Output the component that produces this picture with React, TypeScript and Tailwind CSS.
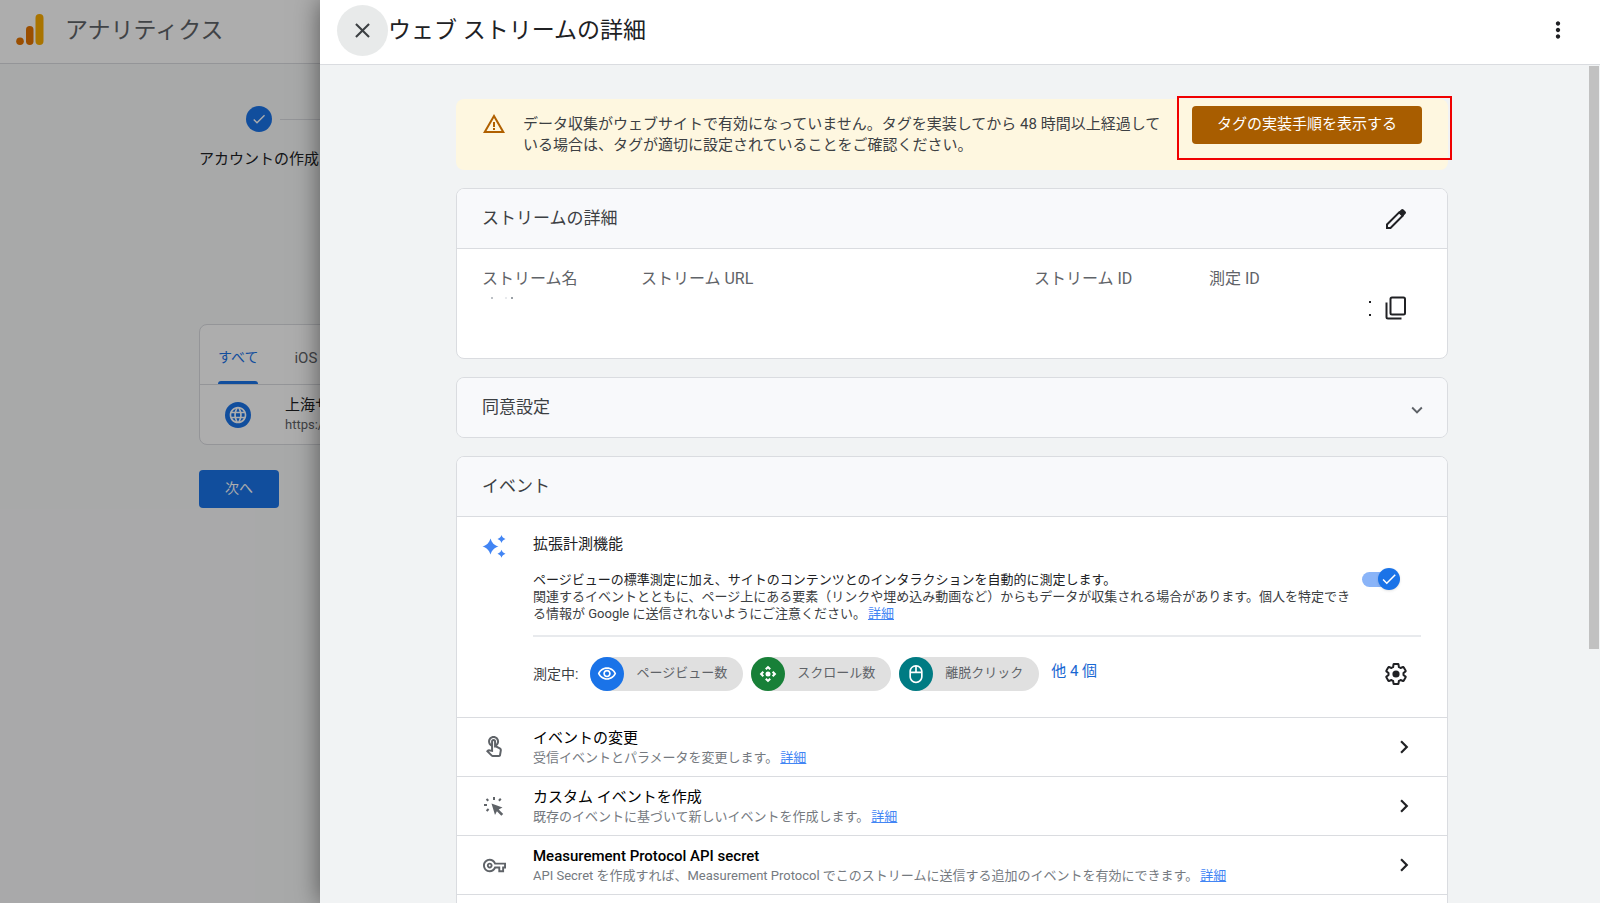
import type { ReactNode } from "react";
import {
  MdCheck,
  MdClose,
  MdControlCamera,
  MdExpandMore,
  MdLanguage,
  MdMoreVert,
  MdOutlineMouse,
  MdOutlineTouchApp,
  MdOutlineVisibility,
  MdOutlineVpnKey,
  MdNavigateNext,
  MdWarningAmber,
} from "react-icons/md";

function AnalyticsLogo() {
  return (
    <svg width="28" height="32" viewBox="0 0 28 32" className="shrink-0">
      <rect x="19.5" y="0" width="8" height="31" rx="4" fill="#F9AB00" />
      <rect x="10" y="12" width="7.5" height="19" rx="3.75" fill="#E37400" />
      <circle cx="4" cy="27.3" r="3.8" fill="#E37400" />
    </svg>
  );
}

function SparkleIcon() {
  return (
    <svg width="24" height="24" viewBox="0 0 24 24" fill="#4285F4">
      <path d="M8.5 3.5C10 8 12 10 16.500 11.500C12 13 10 15 8.500 19.500C7 15 5 13 .5 11.500C5 10 7 8 8.500 3.500z" />
      <path d="M19.500 0C20.300 2.200 21.300 3.200 23.500 4C21.300 4.800 20.300 5.800 19.500 8C18.700 5.800 17.700 4.800 15.500 4C17.700 3.200 18.700 2.200 19.500 0z" />
      <path d="M19.500 14.800C20.300 17 21.300 18 23.500 18.800C21.300 19.600 20.300 20.600 19.500 22.800C18.700 20.600 17.700 19.600 15.500 18.800C17.700 18 18.700 17 19.500 14.800z" />
    </svg>
  );
}

function PencilIcon() {
  return (
    <svg width="22" height="22" viewBox="0 0 22 22" fill="none" stroke="currentColor" strokeWidth="2">
      <path d="M2 20v-3.500L14.200 4.300l3.500 3.500L5.500 20z" />
      <path
        d="M13.500 4.200l2.700-2.700a1.600 1.600 0 0 1 2.300 0l2 2a1.600 1.600 0 0 1 0 2.300l-2.700 2.700z"
        fill="currentColor"
        stroke="none"
      />
    </svg>
  );
}

function CopyIcon() {
  return (
    <svg width="22" height="24" viewBox="0 0 22 24" fill="none" stroke="currentColor" strokeWidth="2">
      <rect x="5.500" y="1.500" width="14.500" height="17" rx="1.500" />
      <path d="M1.500 6.500V21a1.500 1.500 0 0 0 1.500 1.500h13.500" />
    </svg>
  );
}

function ClickIcon() {
  return (
    <svg width="22" height="22" viewBox="0 0 22 22" fill="currentColor">
      <path d="M8.500 8.500l11 4-3.800 2 4.500 4.400-1.900 1.900-4.400-4.500-1.900 3.600z" />
      <path
        d="M1 10h3M3.500 4l1.800 1.800M11 2v3M17.800 3.700l-1.900 2M3.600 16l2-2"
        fill="none"
        stroke="currentColor"
        strokeWidth="2"
      />
    </svg>
  );
}

function GearIcon() {
  return (
    <svg width="24" height="24" viewBox="0 0 24 24" fill="none" stroke="currentColor" strokeWidth="2">
      <path
        strokeLinejoin="round"
        d="M19.43 12.98c.04-.32.07-.64.07-.98s-.03-.66-.07-.98l2.110-1.650c.19-.15.24-.42.12-.64l-2-3.460c-.12-.22-.39-.3-.61-.22l-2.490 1c-.52-.4-1.080-.73-1.690-.98l-.38-2.650C14.460 2.180 14.250 2 14 2h-4c-.25 0-.46.18-.49.42l-.38 2.650c-.61.25-1.170.59-1.690.98l-2.490-1c-.23-.09-.49 0-.61.22l-2 3.460c-.13.22-.07.49.12.64l2.110 1.650c-.04.32-.07.65-.07.98s.03.66.07.98l-2.110 1.650c-.19.15-.24.42-.12.64l2 3.460c.12.22.39.3.61.22l2.490-1c.52.4 1.080.73 1.690.98l.38 2.650c.03.24.24.42.49.42h4c.25 0 .46-.18.49-.42l.38-2.650c.61-.25 1.170-.59 1.690-.98l2.490 1c.23.09.49 0 .61-.22l2-3.460c.12-.22.07-.49-.12-.64z"
      />
      <circle cx="12" cy="12" r="3.600" fill="currentColor" stroke="none" />
    </svg>
  );
}

const chips = [
  { label: "ページビュー数", color: "bg-[#1a73e8]", icon: <MdOutlineVisibility size={20} /> },
  { label: "スクロール数", color: "bg-[#188038]", icon: <MdControlCamera size={20} /> },
  { label: "離脱クリック", color: "bg-[#007b83]", icon: <MdOutlineMouse size={20} /> },
];

const eventRows = [
  {
    title: "イベントの変更",
    text: "受信イベントとパラメータを変更します。",
    icon: <MdOutlineTouchApp size={24} />,
    weight: "font-normal",
  },
  {
    title: "カスタム イベントを作成",
    text: "既存のイベントに基づいて新しいイベントを作成します。",
    icon: <ClickIcon />,
    weight: "font-normal",
  },
  {
    title: "Measurement Protocol API secret",
    text: "API Secret を作成すれば、Measurement Protocol でこのストリームに送信する追加のイベントを有効にできます。",
    icon: <MdOutlineVpnKey size={23} />,
    weight: "font-medium",
  },
];

function DetailsLink() {
  return (
    <a href="#details" className="ml-[2px] text-[#4285f4] underline">
      詳細
    </a>
  );
}

function Card({ title, action, children }: { title: string; action?: ReactNode; children?: ReactNode }) {
  return (
    <section className="overflow-hidden rounded-lg border border-[#dadce0] bg-white">
      <header className="flex h-[59px] items-center justify-between bg-[#f8f9fb] pl-[25px]">
        <h2 className="pb-[2px] text-[17px] leading-6 text-[#3c4043]">{title}</h2>
        {action}
      </header>
      {children}
    </section>
  );
}

function SetupPage() {
  return (
    <div className="h-full bg-[#f8f9fa]">
      <header className="flex h-16 items-center gap-[21px] border-b border-[#dadce0] bg-white px-4 pb-1">
        <AnalyticsLogo />
        <span className="pt-[2px] text-[23px] leading-8 text-[#5f6368]">アナリティクス</span>
      </header>
      <div className="w-[1200px] pt-[42px] pl-[199px]">
        <div className="flex items-center gap-2 pl-[47px]">
          <span className="flex size-[26px] items-center justify-center rounded-full bg-[#1a73e8] text-white">
            <MdCheck size={16} />
          </span>
          <span className="h-px flex-1 bg-[#dadce0]" />
        </div>
        <p className="mt-[15px] text-[15px] leading-6 text-[#202124]">アカウントの作成</p>

        <div className="mt-[153px] rounded-lg border border-[#dadce0] bg-white">
          <div className="flex h-[60px] items-end gap-9 border-b border-[#dadce0] pl-[18px] text-[14px] leading-6">
            <button className="flex flex-col items-center text-[#1a73e8]">
              すべて
              <span className="mt-3 h-[3px] w-10 rounded-t bg-[#1a73e8]" />
            </button>
            <button className="pb-[14px] text-[15px] text-[#5f6368]">iOS</button>
          </div>
          <div className="flex h-[59px] items-center gap-[34px] pl-[25px]">
            <span className="flex size-[26px] items-center justify-center rounded-full bg-[#1a73e8] text-white">
              <MdLanguage size={20} />
            </span>
            <div>
              <p className="text-[15px] leading-5 text-[#202124]">上海サイト</p>
              <p className="text-[13px] leading-5 text-[#5f6368]">https://</p>
            </div>
          </div>
        </div>

        <button className="mt-[25px] h-[38px] rounded bg-[#1a73e8] px-[26px] pb-[2px] text-[14px] text-white">
          次へ
        </button>
      </div>
    </div>
  );
}

function WarningBanner() {
  return (
    <div className="flex items-start rounded-lg bg-[#fef7e0] pt-[7px] pb-[14px] pl-[26px]">
      <MdWarningAmber size={24} className="mt-[6px] shrink-0 text-[#b06000]" />
      <p className="ml-[17px] flex-1 pt-2 text-[15px] leading-[21px] text-[#3c4043]">
        データ収集がウェブサイトで有効になっていません。タグを実装してから 48
        時間以上経過している場合は、タグが適切に設定されていることをご確認ください。
      </p>
      <div className="relative mr-[26px] ml-6">
        <button className="h-[38px] rounded bg-[#a85d00] px-[25px] pb-[2px] text-[15px] text-white">
          タグの実装手順を表示する
        </button>
        <span className="pointer-events-none absolute -top-[10px] -right-[30px] -bottom-4 -left-[15px] border-2 border-[#f00000]" />
      </div>
    </div>
  );
}

function StreamDetails() {
  return (
    <Card
      title="ストリームの詳細"
      action={
        <button aria-label="編集" className="mr-10 text-[#202124]">
          <PencilIcon />
        </button>
      }
    >
      <dl className="grid h-[110px] grid-cols-[159fr_393fr_175fr_238fr] items-start border-t border-[#dadce0] pt-[18px] pl-[25px] text-[16px] leading-6 text-[#5f6368]">
        <div>
          <dt>ストリーム名</dt>
          <dd className="flex gap-2 pt-[6px] pl-[9px]">
            <span className="size-[2px] bg-[#bdc1c6]" />
            <span className="ml-1 size-[2px] bg-[#e8eaed]" />
            <span className="-ml-1 size-[2px] bg-[#9aa0a6]" />
          </dd>
        </div>
        <dt>ストリーム URL</dt>
        <dt>ストリーム ID</dt>
        <div>
          <dt>測定 ID</dt>
          <dd className="flex items-center justify-end gap-[14px] pt-[5px] pr-10 text-[#202124]">
            <span className="flex flex-col gap-[11px]">
              <span className="size-[2px] bg-[#202124]" />
              <span className="size-[2px] bg-[#202124]" />
            </span>
            <button aria-label="コピー">
              <CopyIcon />
            </button>
          </dd>
        </div>
      </dl>
    </Card>
  );
}

function EnhancedMeasurement() {
  return (
    <div className="flex gap-[27px] border-t border-[#dadce0] pt-[17px] pb-[26px] pl-[25px]">
      <div className="shrink-0 pt-px">
        <SparkleIcon />
      </div>
      <div className="mr-[26px] flex-1 text-[#3c4043]">
        <h3 className="text-[15px] leading-5 text-[#202124]">拡張計測機能</h3>
        <div className="mt-[17px] flex items-start justify-between">
          <div className="max-w-[824px] text-[13px] leading-[17px]">
            <p className="text-[#202124]">
              ページビューの標準測定に加え、サイトのコンテンツとのインタラクションを自動的に測定します。
            </p>
            <p>
              関連するイベントとともに、ページ上にある要素（リンクや埋め込み動画など）からもデータが収集される場合があります。個人を特定できる情報が
              Google に送信されないようにご注意ください。
              <DetailsLink />
            </p>
          </div>
          <label className="relative mr-[21px] flex h-4 w-[38px] shrink-0 items-center">
            <input
              type="checkbox"
              role="switch"
              defaultChecked
              aria-label="拡張計測機能"
              className="h-[15px] w-9 appearance-none rounded-full bg-[#8ab4f8]"
            />
            <span className="absolute -top-[3px] right-0 flex size-[22px] items-center justify-center rounded-full bg-[#1a73e8] text-white shadow">
              <MdCheck size={18} />
            </span>
          </label>
        </div>
        <hr className="mt-[13px] border-t-2 border-[#e8eaed]" />
        <div className="mt-5 flex items-center gap-2">
          <span className="mr-1 text-[14px] leading-6">測定中:</span>
          {chips.map((chip) => (
            <span key={chip.label} className="flex h-[34px] items-center gap-3 rounded-full bg-[#e0e0e0] pr-4">
              <span className={`flex size-[34px] items-center justify-center rounded-full text-white ${chip.color}`}>
                {chip.icon}
              </span>
              <span className="pb-[2px] text-[13px] leading-5 text-[#5f6368]">{chip.label}</span>
            </span>
          ))}
          <button className="ml-1 pb-[6px] text-[15px] leading-5 text-[#1967d2]">他 4 個</button>
          <button aria-label="設定" className="mr-[13px] ml-auto text-[#202124]">
            <GearIcon />
          </button>
        </div>
      </div>
    </div>
  );
}

function StreamDrawer() {
  return (
    <aside className="absolute inset-y-0 right-0 left-80 flex flex-col bg-[#f1f3f4] shadow-[0_0_24px_rgba(0,0,0,0.5)]">
      <header className="flex h-[65px] shrink-0 items-center border-b border-[#dadce0] bg-white pr-[29px] pb-1 pl-[17px]">
        <button
          aria-label="閉じる"
          className="flex size-[51px] items-center justify-center rounded-full bg-[#e8eaea] text-[#3c4043]"
        >
          <MdClose size={25} />
        </button>
        <h1 className="pt-[2px] text-[23px] leading-8 text-[#202124]">ウェブ ストリームの詳細</h1>
        <button aria-label="その他" className="ml-auto text-[#202124]">
          <MdMoreVert size={26} />
        </button>
      </header>
      <div className="flex min-h-0 flex-1">
        <div className="flex-1 overflow-hidden px-4 pt-[34px]">
          <main className="mx-auto flex max-w-[992px] flex-col gap-[18px]">
            <WarningBanner />
            <StreamDetails />
            <Card
              title="同意設定"
              action={
                <button aria-label="展開" className="mt-1 mr-[19px] text-[#5f6368]">
                  <MdExpandMore size={22} />
                </button>
              }
            />
            <Card title="イベント">
              <EnhancedMeasurement />
              {eventRows.map((row) => (
                <div key={row.title} className="flex h-[59px] items-center border-t border-[#dadce0] pr-[30px] pl-[25px]">
                  <span className="flex w-6 justify-center text-[#5f6368]">{row.icon}</span>
                  <div className="ml-[27px] flex-1">
                    <h3 className={`text-[15px] leading-5 text-black ${row.weight}`}>{row.title}</h3>
                    <p className="text-[13px] leading-[19px] text-[#757a7f]">
                      {row.text}
                      <DetailsLink />
                    </p>
                  </div>
                  <button aria-label={row.title} className="text-[#202124]">
                    <MdNavigateNext size={26} />
                  </button>
                </div>
              ))}
              <div className="h-[59px] border-t border-[#dadce0]" />
            </Card>
          </main>
        </div>
        <div className="w-4 shrink-0 pt-px pl-[5px]">
          <div className="h-[583px] w-[10px] bg-[#c1c1c1]" />
        </div>
      </div>
    </aside>
  );
}

export default function App() {
  return (
    <div className="relative h-screen overflow-hidden font-[Roboto,'Noto_Sans_CJK_JP',sans-serif]" lang="ja">
      <SetupPage />
      <div className="absolute inset-0 bg-black/32" />
      <StreamDrawer />
    </div>
  );
}
